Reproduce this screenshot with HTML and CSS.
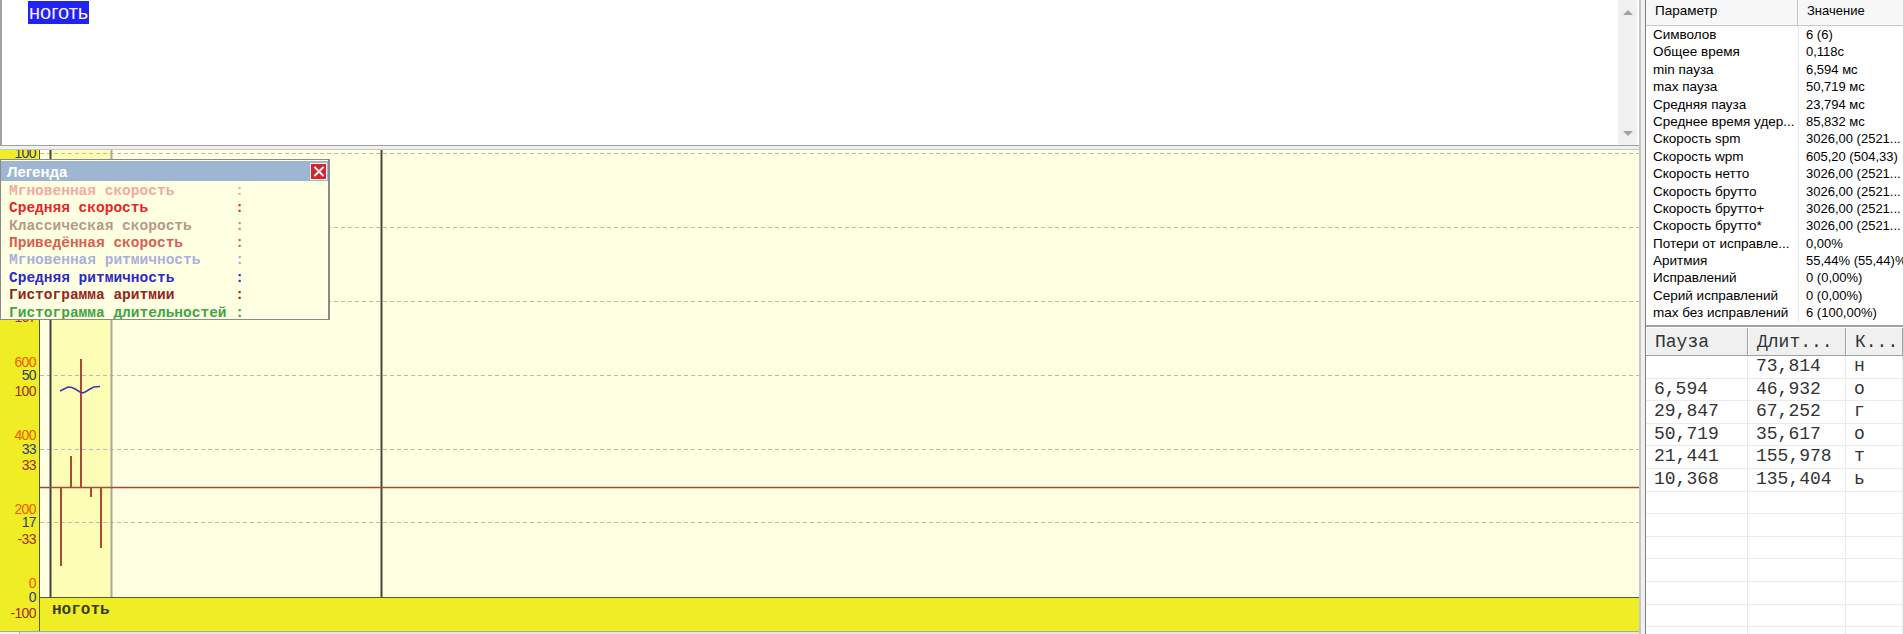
FILE: index.html
```html
<!DOCTYPE html>
<html lang="ru">
<head>
<meta charset="utf-8">
<title>Статистика</title>
<link rel="stylesheet" href="styles.css">
</head>
<body>
<div class="app">
  <div class="left">
    <div class="editor">
      <div class="editor-text"><span class="sel">ноготь</span></div>
      <div class="vscroll"><span class="arr up"></span><span class="arr down"></span></div>
    </div>
    <div class="hsplit"></div>
    <div class="chart">
      <div class="chart-main">
        <div class="axis">
          <span class="lbl o" style="top:-17px">1200</span>
          <span class="lbl o" style="top:56px">1000</span>
          <span class="lbl o" style="top:130px">800</span>
          <span class="lbl o" style="top:204px">600</span>
          <span class="lbl o" style="top:277px">400</span>
          <span class="lbl o" style="top:351px">200</span>
          <span class="lbl o" style="top:425px">0</span>
          <span class="lbl b" style="top:-5px">100</span>
          <span class="lbl b" style="top:69px">83</span>
          <span class="lbl b" style="top:143px">67</span>
          <span class="lbl b" style="top:217px">50</span>
          <span class="lbl b" style="top:291px">33</span>
          <span class="lbl b" style="top:364px">17</span>
          <span class="lbl b" style="top:439px">0</span>
          <span class="lbl r" style="top:11px">300</span>
          <span class="lbl r" style="top:85px">233</span>
          <span class="lbl r" style="top:159px">167</span>
          <span class="lbl r" style="top:233px">100</span>
          <span class="lbl r" style="top:307px">33</span>
          <span class="lbl r" style="top:381px">-33</span>
          <span class="lbl r" style="top:455px">-100</span>
        </div>
        <div class="plot-col">
          <div class="plot">
            <svg width="1599" height="447" viewBox="0 0 1599 447" xmlns="http://www.w3.org/2000/svg">
              <rect x="11" y="0" width="60" height="447" fill="#fdfdb6"/>
              <g stroke="#b9b9b0" stroke-width="1" stroke-dasharray="4 3">
                <line x1="0" y1="3.5" x2="1599" y2="3.5"/>
                <line x1="0" y1="77.5" x2="1599" y2="77.5"/>
                <line x1="0" y1="151.5" x2="1599" y2="151.5"/>
                <line x1="0" y1="225.5" x2="1599" y2="225.5"/>
                <line x1="0" y1="299.5" x2="1599" y2="299.5"/>
                <line x1="0" y1="372.5" x2="1599" y2="372.5"/>
              </g>
              <line x1="71.5" y1="0" x2="71.5" y2="447" stroke="#a8a8a0" stroke-width="2"/>
              <line x1="10.5" y1="0" x2="10.5" y2="447" stroke="#46463a" stroke-width="2"/>
              <line x1="341.5" y1="0" x2="341.5" y2="447" stroke="#46463a" stroke-width="2"/>
              <line x1="0" y1="337.5" x2="1599" y2="337.5" stroke="#a84a38" stroke-width="1.5"/>
              <g stroke="#a84a38" stroke-width="2">
                <line x1="21" y1="337" x2="21" y2="416"/>
                <line x1="31" y1="306" x2="31" y2="337"/>
                <line x1="41" y1="209" x2="41" y2="337"/>
                <line x1="51" y1="337" x2="51" y2="347"/>
                <line x1="61" y1="337" x2="61" y2="398"/>
              </g>
              <polyline points="20,241 24,239 28,237 32,237.5 36,239.5 40,242 43,243 46,241.5 50,239 54,237 60,236.5" fill="none" stroke="#3a3aa8" stroke-width="1.5"/>
            </svg>
          </div>
          <div class="wordbar">ноготь</div>
        </div>
      </div>
      <div class="hscroll"><span class="hs-btn"></span></div>
      <div class="legend">
        <div class="legend-title"><span>Легенда</span><span class="close"></span></div>
        <div class="legend-body">
          <div class="lg c1">Мгновенная скорость       :</div>
          <div class="lg c2">Средняя скорость          :</div>
          <div class="lg c3">Классическая скорость     :</div>
          <div class="lg c4">Приведённая скорость      :</div>
          <div class="lg c5">Мгновенная ритмичность    :</div>
          <div class="lg c6">Средняя ритмичность       :</div>
          <div class="lg c7">Гистограмма аритмии       :</div>
          <div class="lg c8">Гистограмма длительностей :</div>
        </div>
      </div>
    </div>
  </div>
  <div class="vsplit"></div>
  <div class="right">
    <div class="stats">
      <div class="st-head"><div class="st-h">Параметр</div><div class="st-h st-h2">Значение</div></div>
      <div class="st-row"><div class="k">Символов</div><div class="v">6 (6)</div></div>
      <div class="st-row"><div class="k">Общее время</div><div class="v">0,118с</div></div>
      <div class="st-row"><div class="k">min пауза</div><div class="v">6,594 мс</div></div>
      <div class="st-row"><div class="k">max пауза</div><div class="v">50,719 мс</div></div>
      <div class="st-row"><div class="k">Средняя пауза</div><div class="v">23,794 мс</div></div>
      <div class="st-row"><div class="k">Среднее время удер...</div><div class="v">85,832 мс</div></div>
      <div class="st-row"><div class="k">Скорость spm</div><div class="v">3026,00 (2521...</div></div>
      <div class="st-row"><div class="k">Скорость wpm</div><div class="v">605,20 (504,33)</div></div>
      <div class="st-row"><div class="k">Скорость нетто</div><div class="v">3026,00 (2521...</div></div>
      <div class="st-row"><div class="k">Скорость брутто</div><div class="v">3026,00 (2521...</div></div>
      <div class="st-row"><div class="k">Скорость брутто+</div><div class="v">3026,00 (2521...</div></div>
      <div class="st-row"><div class="k">Скорость брутто*</div><div class="v">3026,00 (2521...</div></div>
      <div class="st-row"><div class="k">Потери от исправле...</div><div class="v">0,00%</div></div>
      <div class="st-row"><div class="k">Аритмия</div><div class="v">55,44% (55,44)%</div></div>
      <div class="st-row"><div class="k">Исправлений</div><div class="v">0 (0,00%)</div></div>
      <div class="st-row"><div class="k">Серий исправлений</div><div class="v">0 (0,00%)</div></div>
      <div class="st-row"><div class="k">max без исправлений</div><div class="v">6 (100,00%)</div></div>
    </div>
    <div class="keys">
      <div class="ky-head"><div class="kh">Пауза</div><div class="kh">Длит...</div><div class="kh">К...</div></div>
      <div class="ky-row"><div></div><div>73,814</div><div>н</div></div>
      <div class="ky-row"><div>6,594</div><div>46,932</div><div>о</div></div>
      <div class="ky-row"><div>29,847</div><div>67,252</div><div>г</div></div>
      <div class="ky-row"><div>50,719</div><div>35,617</div><div>о</div></div>
      <div class="ky-row"><div>21,441</div><div>155,978</div><div>т</div></div>
      <div class="ky-row"><div>10,368</div><div>135,404</div><div>ь</div></div>
      <div class="ky-row"><div></div><div></div><div></div></div>
      <div class="ky-row"><div></div><div></div><div></div></div>
      <div class="ky-row"><div></div><div></div><div></div></div>
      <div class="ky-row"><div></div><div></div><div></div></div>
      <div class="ky-row"><div></div><div></div><div></div></div>
      <div class="ky-row"><div></div><div></div><div></div></div>
      <div class="ky-row"><div></div><div></div><div></div></div>
    </div>
  </div>
</div>
</body>
</html>
```
FILE: styles.css
```css
* { box-sizing: border-box; margin: 0; padding: 0; }
html, body { width: 1903px; height: 634px; overflow: hidden; background: #f0f0f0; }
body { font-family: "Liberation Sans", Arial, sans-serif; color: #000; }

.app { display: flex; width: 1903px; height: 634px; }

/* left side */
.left { width: 1639px; display: flex; flex-direction: column; }
.editor { height: 145px; display: flex; background: #fff; border-left: 2px solid #a0a0a0; }
.editor-text { flex: 1; padding: 1px 0 0 26px; }
.sel { display: inline-block; background: #2222f2; color: #f4f4ff; font-size: 20px; line-height: 23px; padding: 0 1px; }
.vscroll { width: 19px; margin-right: 2px; background: #f0f0f0; display: flex; flex-direction: column; justify-content: space-between; align-items: center; padding: 10px 0 9px; }
.arr { width: 0; height: 0; border-left: 5px solid transparent; border-right: 5px solid transparent; }
.arr.up { border-bottom: 5px solid #a3a3a3; }
.arr.down { border-top: 5px solid #a3a3a3; }

.hsplit { height: 5px; background: #f0f0f0; border-top: 1px solid #a0a0a0; border-bottom: 1px solid #c8c8c8; }

.chart { position: relative; height: 484px; display: flex; flex-direction: column; }
.chart-main { display: flex; height: 481px; }
.axis { width: 40px; background: #efee24; border-right: 1px solid #57573a; position: relative; overflow: hidden; }
.lbl { position: absolute; right: 3px; font-size: 14px; line-height: 16px; letter-spacing: -0.6px; }
.lbl.o { color: #f25a05; }
.lbl.b { color: #2f3a78; }
.lbl.r { color: #a3301c; }

.plot-col { flex: 1; display: flex; flex-direction: column; min-width: 0; }
.plot { height: 447px; background: #ffffe2; }
.plot svg { display: block; }
.wordbar { flex: 1; background: #efee24; border-top: 1px solid #57573a; padding: 3px 0 0 12px; font-family: "Liberation Mono", "Courier New", monospace; font-weight: bold; font-size: 16px; line-height: 18px; color: #3a3a30; }
.hscroll { height: 3px; background: #e6e6e6; border-top: 1px solid #a8a8a8; display: flex; }
.hs-btn { width: 20px; background: #f4f4f4; border-right: 1px solid #b0b0b0; }

/* legend overlay */
.legend { position: absolute; left: 0; top: 9px; width: 330px; height: 161px; background: #ffffe2; border: 1px solid #8a8a8a; border-right-width: 2px; padding: 1px 0 0 0; overflow: hidden; }
.legend-title { height: 20px; background: #9fb6d3; display: flex; align-items: center; justify-content: space-between; padding: 0 1px 0 6px; color: #fff; font-weight: bold; font-size: 15px; }
.close { width: 17px; height: 17px; background: #d4262a; border: 1px solid #f4f4f4; position: relative; }
.close::before, .close::after { content: ""; position: absolute; left: 7px; top: 1px; width: 2px; height: 13px; background: #fff; }
.close::before { transform: rotate(45deg); }
.close::after { transform: rotate(-45deg); }
.legend-body { padding: 2px 0 0 8px; }
.lg { white-space: pre; font-family: "Liberation Mono", "Courier New", monospace; font-weight: bold; font-size: 14.5px; line-height: 17.37px; height: 17.37px; }
.c1 { color: #f2aaa2; }
.c2 { color: #e82424; }
.c3 { color: #b59a8c; }
.c4 { color: #d8604e; }
.c5 { color: #a9b0de; }
.c6 { color: #2a2ac4; }
.c7 { color: #93261a; }
.c8 { color: #44a444; }

/* splitter */
.vsplit { width: 6px; background: #f0f0f0; border-left: 2px solid #c6c6c6; }

/* right side */
.right { width: 258px; background: #fff; border-left: 1px solid #7e7e7e; display: flex; flex-direction: column; overflow: hidden; }
.stats { height: 327px; flex: none; border-bottom: 2px solid #a2a2a2; overflow: hidden; font-size: 13.5px; }
.st-head { display: grid; grid-template-columns: 152px 1fr; height: 26px; background: #f7f7f7; border-bottom: 1px solid #c9c9c9; }
.st-h { padding: 2px 0 0 9px; line-height: 18px; border-right: 1px solid #c0c0c0; }
.st-h2 { border-right: none; padding-left: 9px; white-space: nowrap; font-size: 13px; }
.st-row { display: grid; grid-template-columns: 152px 1fr; height: 17.4px; line-height: 17.4px; white-space: nowrap; }
.st-row .k { padding-left: 7px; overflow: hidden; }
.st-row .v { padding-left: 7px; border-left: 1px solid #e6e6e6; overflow: hidden; font-size: 13px; }

.keys { flex: 1; overflow: hidden; font-family: "Liberation Mono", "Courier New", monospace; font-size: 18px; color: #333; }
.ky-head { display: grid; grid-template-columns: 102px 98px 1fr; height: 29px; background: #f0f0f0; border-top: 1px solid #fff; border-bottom: 1px solid #a0a0a0; }
.kh { padding: 4px 0 0 8px; line-height: 20px; border-right: 1px solid #a0a0a0; border-left: 1px solid #fff; white-space: nowrap; overflow: hidden; }
.ky-row { display: grid; grid-template-columns: 102px 98px 1fr; height: 22.6px; border-bottom: 1px solid #ebebeb; line-height: 21px; white-space: nowrap; }
.ky-row div { padding-left: 8px; border-right: 1px solid #ebebeb; }
```
